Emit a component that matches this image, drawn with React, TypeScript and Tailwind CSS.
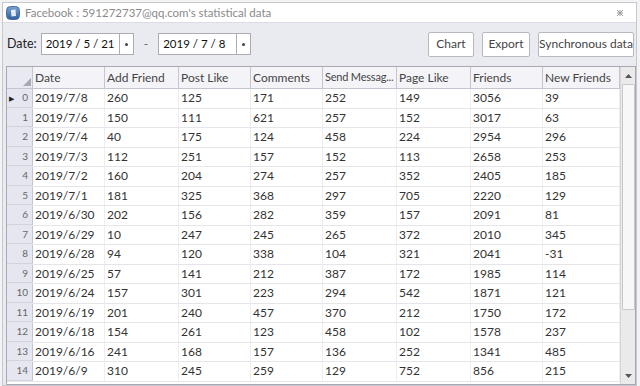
import React from 'react'

const rows: string[][] = [
  ['2019/7/8', '260', '125', '171', '252', '149', '3056', '39'],
  ['2019/7/6', '150', '111', '621', '257', '152', '3017', '63'],
  ['2019/7/4', '40', '175', '124', '458', '224', '2954', '296'],
  ['2019/7/3', '112', '251', '157', '152', '113', '2658', '253'],
  ['2019/7/2', '160', '204', '274', '257', '352', '2405', '185'],
  ['2019/7/1', '181', '325', '368', '297', '705', '2220', '129'],
  ['2019/6/30', '202', '156', '282', '359', '157', '2091', '81'],
  ['2019/6/29', '10', '247', '245', '265', '372', '2010', '345'],
  ['2019/6/28', '94', '120', '338', '104', '321', '2041', '-31'],
  ['2019/6/25', '57', '141', '212', '387', '172', '1985', '114'],
  ['2019/6/24', '157', '301', '223', '294', '542', '1871', '121'],
  ['2019/6/19', '201', '240', '457', '370', '212', '1750', '172'],
  ['2019/6/18', '154', '261', '123', '458', '102', '1578', '237'],
  ['2019/6/16', '241', '168', '157', '136', '252', '1341', '485'],
  ['2019/6/9', '310', '245', '259', '129', '752', '856', '215'],
]

const columns = [
  { label: 'Date', w: 'w-[72px]' },
  { label: 'Add Friend', w: 'w-[74px]' },
  { label: 'Post Like', w: 'w-[72px]' },
  { label: 'Comments', w: 'w-[72px]' },
  { label: 'Send Messag...', w: 'w-[74px]' },
  { label: 'Page Like', w: 'w-[74px]' },
  { label: 'Friends', w: 'w-[72px]' },
  { label: 'New Friends', w: 'flex-1' },
]

function DateBox({ value }: { value: string }) {
  return (
    <div className="flex items-center h-[22px]">
      <div className="w-[79px] h-full bg-white border border-[#abadb3] flex items-center pl-[4px] text-[11.5px] text-[#111] whitespace-nowrap">
        {value}
      </div>
      <div className="w-[14px] h-full bg-white border border-[#abadb3] border-l-0 flex items-center justify-center">
        <span className="block w-[3px] h-[3px] bg-[#444] rounded-full" />
      </div>
    </div>
  )
}

export default function App() {
  return (
    <div className="w-[640px] h-[386px] bg-[#f3f3f3] pl-[2px] pr-[3px] pt-[2px] overflow-hidden font-['Lato',sans-serif] text-[#333]">
      <div className="h-full flex flex-col border border-[#c7c7cf] bg-[#eaeaf1]">
        {/* title bar */}
        <div className="h-[20px] bg-white flex items-center pl-[3px] pr-[12px] border-b border-[#dcdce4]">
          <svg width="14" height="14" viewBox="0 0 14 14" className="shrink-0">
            <defs>
              <linearGradient id="g" x1="0" y1="0" x2="0" y2="1">
                <stop offset="0" stopColor="#7aa3d6" />
                <stop offset="1" stopColor="#2e5e9c" />
              </linearGradient>
            </defs>
            <rect x="0.5" y="0.5" width="13" height="13" rx="4" fill="url(#g)" stroke="#4a6f9e" />
            <path d="M5 4 L9.5 3.5 L10 10 L5.5 10.5 Z" fill="#fff" opacity="0.85" />
          </svg>
          <span className="ml-[5px] text-[11.5px] text-[#8a8a8a]">Facebook : 591272737@qq.com's statistical data</span>
          <div className="flex-1" />
          <svg width="8" height="8" viewBox="0 0 8 8">
            <path d="M1 1 L7 7 M7 1 L1 7 M1 4 L7 4 M4 1 L4 7" stroke="#9a9a9a" strokeWidth="1" />
          </svg>
        </div>

        {/* toolbar */}
        <div className="h-[43px] flex items-center pl-[4px] pr-[2px] pb-[1px]">
          <span className="text-[12.5px] text-[#222] mr-[4px]">Date:</span>
          <DateBox value="2019 / 5 / 21" />
          <span className="mx-[10px] text-[12px] text-[#666]">-</span>
          <DateBox value="2019 / 7 / 8" />
          <div className="flex-1" />
          <div className="flex gap-[8px]">
            <button className="h-[25px] w-[46px] bg-white border border-[#b8b8c0] rounded-[2px] text-[12px] text-[#444]">Chart</button>
            <button className="h-[25px] w-[48px] bg-white border border-[#b8b8c0] rounded-[2px] text-[12px] text-[#444]">Export</button>
            <button className="h-[25px] w-[96px] bg-white border border-[#b8b8c0] rounded-[2px] text-[12px] text-[#444] whitespace-nowrap">Synchronous data</button>
          </div>
        </div>

        {/* grid */}
        <div className="flex-1 ml-[3px] border border-[#a9a9b3] bg-white flex overflow-hidden">
          <div className="flex-1 flex flex-col">
            <div className="h-[22px] flex bg-[#f4f4f8] border-b border-[#c5c5d0]">
              <div className="w-[26px] relative border-r border-[#c5c5d0] bg-[#e9e9f1]">
                <svg width="8" height="8" viewBox="0 0 8 8" className="absolute right-[1px] bottom-[2px]">
                  <path d="M8 0 L8 8 L0 8 Z" fill="#a8a8b4" />
                </svg>
              </div>
              {columns.map((c) => (
                <div key={c.label} className={`${c.w} min-w-0 border-r border-[#c5c5d0] px-[2px] flex items-center text-[12px] text-[#444] whitespace-nowrap`}>
                  {c.label === 'Send Messag...' ? <span className="text-[11px] tracking-[-0.2px]">{c.label}</span> : c.label}
                </div>
              ))}
            </div>
            {rows.map((r, i) => (
              <div key={i} className="h-[19.5px] flex border-b border-[#e6e6ea]">
                <div className="w-[26px] bg-[#e6e6f0] border-r border-[#c5c5d0] border-b border-b-[#d3d3de] flex items-center pr-[4px] text-[10px] text-[#666]">
                  <span className="w-[9px] pl-[2px] text-[7px] text-[#222]">{i === 0 ? '▶' : ''}</span>
                  <span className="flex-1 text-right">{i}</span>
                </div>
                {r.map((v, j) => (
                  <div key={j} className={`${columns[j].w} border-r border-[#eeeef2] px-[2px] flex items-center text-[12px] text-[#333] whitespace-nowrap`}>
                    {v}
                  </div>
                ))}
              </div>
            ))}
          </div>

          {/* scrollbar */}
          <div className="w-[15px] bg-[#eaeaea] border-l border-[#d6d6d6] flex flex-col items-center">
            <div className="h-[17px] flex items-center justify-center">
              <svg width="7" height="4" viewBox="0 0 7 4"><path d="M0 4 L3.5 0 L7 4 Z" fill="#555" /></svg>
            </div>
            <div className="w-[13px] h-[226px] bg-[#f7f7f7] border border-[#c9c9c9] rounded-[1px]" />
            <div className="flex-1" />
            <div className="h-[17px] flex items-center justify-center">
              <svg width="7" height="4" viewBox="0 0 7 4"><path d="M0 0 L7 0 L3.5 4 Z" fill="#555" /></svg>
            </div>
          </div>
        </div>
      </div>
    </div>
  )
}
